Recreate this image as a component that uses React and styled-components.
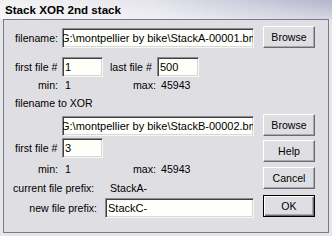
import React from 'react';
import styled, { createGlobalStyle } from 'styled-components';

const Global = createGlobalStyle`
  html, body { margin: 0; padding: 0; background: #e4e4e8; }
  body {
    width: 332px; height: 236px; overflow: hidden;
    font-family: "Liberation Sans", Arial, sans-serif;
    font-size: 10.6px; color: #000;
  }
  * { box-sizing: border-box; }
`;

const Window = styled.div`
  width: 332px; height: 236px;
  display: flex; flex-direction: column;
  background: #e6e6ea;
`;

const TitleBar = styled.div`
  flex: none; height: 19px;
  display: flex; align-items: center; padding-left: 5px;
  font-family: "Liberation Sans", Arial, sans-serif;
  font-weight: bold; font-size: 11.6px; color: #000;
  background:
    linear-gradient(to bottom, rgba(255,255,255,0) 0%, rgba(255,255,255,0.45) 100%),
    linear-gradient(to right, #f2f2f5 0%, #e4e4ec 45%, #b4b4cc 100%);
`;

const Frame = styled.div`
  flex: 1; margin: 0 3px 3px 3px;
  border: 1px solid #7a7a88;
  background: #dfdfe3;
  display: flex;
`;

const Left = styled.div`
  flex: none; width: 255px;
  padding-left: 11px;
  display: flex; flex-direction: column;
`;

const Right = styled.div`
  flex: none; width: 52px; margin-left: 4px;
  display: flex; flex-direction: column;
`;

const Row = styled.div`
  display: flex; align-items: center;
  height: ${p => p.$h || 20}px;
  margin-top: ${p => p.$mt || 0}px;
  margin-left: ${p => p.$ml || 0}px;
  white-space: nowrap;
`;

const Label = styled.span`
  flex: none;
  width: ${p => p.$w}px;
  margin-left: ${p => p.$ml || 0}px;
  text-align: ${p => p.$right ? 'right' : 'left'};
  padding-right: ${p => p.$pr || 0}px;
`;

const TextBox = styled.div`
  flex: none;
  width: ${p => p.$w}px; height: 20px;
  margin-left: ${p => p.$ml || 0}px;
  background: #fffffa;
  border: 1px solid;
  border-color: #8c8c94 #f6f6f6 #f6f6f6 #8c8c94;
  box-shadow: inset 1px 1px #404044, inset -1px -1px #d8d8dc;
  overflow: hidden; white-space: nowrap;
  display: flex; align-items: center;
  padding-left: 2px;
  font-size: 11px;
`;

const Scrolled = styled.span`
  margin-left: -${p => p.$shift || 0}px;
`;

const Button = styled.button`
  width: 52px; height: 22px;
  margin-top: ${p => p.$mt || 0}px;
  padding: 0;
  font: inherit; color: #000;
  background: #dfdfe3;
  border: 1px solid;
  border-color: ${p => p.$default ? '#000' : '#ffffff #6a6a70 #6a6a70 #ffffff'};
  box-shadow: ${p => p.$default
    ? 'inset 1px 1px #ffffff, inset -1px -1px #6a6a70, inset -2px -2px #a8a8b0'
    : 'inset -1px -1px #a8a8b0'};
  display: flex; align-items: center; justify-content: center;
`;

const StatRow = ({ mt }) => (
  <Row $h={14} $mt={mt} $ml={23}>
    <Label $w={27}>min:</Label>
    <Label $w={68}>1</Label>
    <Label $w={28}>max:</Label>
    <Label $w={40}>45943</Label>
  </Row>
);

export default function App() {
  return (
    <>
      <Global />
      <Window>
        <TitleBar>Stack XOR 2nd stack</TitleBar>
        <Frame>
          <Left>
            <Row $mt={8}>
              <Label $w={47}>filename:</Label>
              <TextBox $w={192}>
                <Scrolled $shift={4}>G:\montpellier by bike\StackA-00001.bmp</Scrolled>
              </TextBox>
            </Row>
            <Row $mt={9}>
              <Label $w={47}>first file #</Label>
              <TextBox $w={41}>1</TextBox>
              <Label $w={47} $ml={7}>last file #</Label>
              <TextBox $w={42}>500</TextBox>
            </Row>
            <StatRow mt={1} />
            <Row $h={14} $mt={4}>
              <Label $w={120}>filename to XOR</Label>
            </Row>
            <Row $mt={6}>
              <TextBox $w={192} $ml={47}>
                <Scrolled $shift={4}>G:\montpellier by bike\StackB-00002.bmp</Scrolled>
              </TextBox>
            </Row>
            <Row $mt={2}>
              <Label $w={47}>first file #</Label>
              <TextBox $w={41}>3</TextBox>
            </Row>
            <StatRow mt={4} />
            <Row $h={14} $mt={5} $ml={-2}>
              <Label $w={97}>current file prefix:</Label>
              <Label $w={60}>StackA-</Label>
            </Row>
            <Row $mt={3}>
              <Label $w={90} $right $pr={8}>new file prefix:</Label>
              <TextBox $w={149}>StackC-</TextBox>
            </Row>
          </Left>
          <Right>
            <Button $mt={6}>Browse</Button>
            <Button $mt={66}>Browse</Button>
            <Button $mt={4}>Help</Button>
            <Button $mt={5}>Cancel</Button>
            <Button $mt={6} $default>OK</Button>
          </Right>
        </Frame>
      </Window>
    </>
  );
}
